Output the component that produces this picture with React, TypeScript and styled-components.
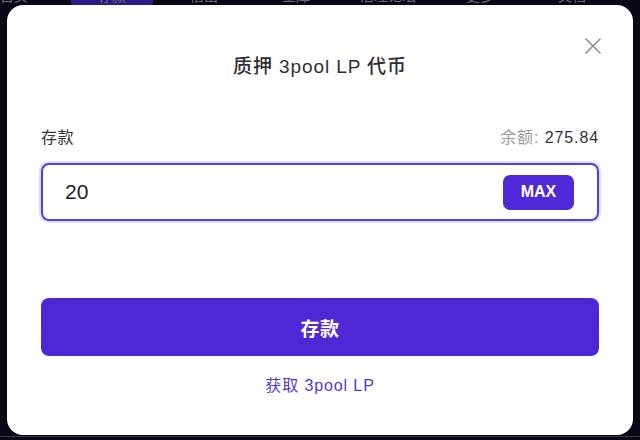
import styled, { createGlobalStyle } from "styled-components";

const GlobalStyle = createGlobalStyle`
  html, body {
    margin: 0;
    padding: 0;
    background: #0b0714;
    font-family: "Liberation Sans", "Noto Sans CJK SC", sans-serif;
  }
`;

const navItems = ["首页", "存款", "借出", "金库", "治理论坛", "更多", "文档"];

export default function App() {
  return (
    <>
      <GlobalStyle />
      <Page>
        {/* шапка, почти вся под диалогом */}
        <Nav>
          {navItems.map((item, i) => (
            <NavItem key={item} active={i === 1}>
              {item}
            </NavItem>
          ))}
        </Nav>

        <Overlay>
          <Dialog>
            <CloseButton aria-label="close">
              <svg width="18" height="18" viewBox="0 0 18 18">
                <path d="M2 2 L16 16 M16 2 L2 16" stroke="#939393" strokeWidth="1.7" strokeLinecap="round" />
              </svg>
            </CloseButton>

            <Title>质押 3pool LP 代币</Title>

            <LabelRow>
              <Label>存款</Label>
              <Balance>
                <Muted>余额: </Muted>275.84
              </Balance>
            </LabelRow>

            <InputBox>
              <Amount defaultValue="20" />
              <MaxButton>MAX</MaxButton>
            </InputBox>

            <SubmitButton>存款</SubmitButton>

            <GetLink href="#">获取 3pool LP</GetLink>
          </Dialog>
          <Divider />
        </Overlay>
      </Page>
    </>
  );
}

const Page = styled.div`
  position: relative;
  width: 640px;
  height: 440px;
  overflow: hidden;
  background: #0b0714;
`;

const Nav = styled.nav`
  display: flex;
  height: 6px;
  overflow: hidden;
`;

const NavItem = styled.div<{ active?: boolean }>`
  width: 82px;
  height: 20px;
  margin-top: -14px;
  margin-right: 10px;
  font-size: 14px;
  line-height: 20px;
  text-align: center;
  color: #6d6a74;
  background: ${(p) => (p.active ? "#2c1c86" : "transparent")};

  &:first-child {
    width: 40px;
    margin-left: -6px;
    margin-right: 37px;
  }
`;

const Overlay = styled.div`
  position: absolute;
  inset: 0;
  display: flex;
  flex-direction: column;
  padding: 5px 7px 0;
`;

const Dialog = styled.div`
  position: relative;
  box-sizing: border-box;
  width: 626px;
  height: 430px;
  background: #ffffff;
  border-radius: 16px;
  padding: 50px 34px 0;
  display: flex;
  flex-direction: column;
`;

const Divider = styled.div`
  height: 1px;
  margin: 1px -7px 0;
  background: #3b3843;
`;

const CloseButton = styled.button`
  position: absolute;
  top: 30px;
  right: 29px;
  width: 22px;
  height: 22px;
  padding: 2px;
  border: none;
  background: none;
  cursor: pointer;
`;

const Title = styled.h2`
  margin: 0;
  height: 24px;
  font-size: 19px;
  line-height: 24px;
  font-weight: 500;
  letter-spacing: 0.9px;
  text-align: center;
  color: #2f2f33;
`;

const LabelRow = styled.div`
  display: flex;
  justify-content: space-between;
  align-items: center;
  margin-top: 49px;
  height: 20px;
  font-size: 16px;
  line-height: 20px;
  letter-spacing: 0.4px;
`;

const Label = styled.span`
  color: #333338;
`;

const Balance = styled.span`
  color: #333338;
  letter-spacing: 0.9px;
`;

const Muted = styled.span`
  color: #9a9a9e;
`;

const InputBox = styled.div`
  box-sizing: border-box;
  display: flex;
  align-items: center;
  margin-top: 15px;
  height: 58px;
  padding: 0 23px 0 22px;
  border: 2px solid #5a3ce0;
  border-radius: 8px;
  box-shadow: 0 0 0 2px rgba(140, 170, 255, 0.35);
`;

const Amount = styled.input`
  flex: 1;
  min-width: 0;
  border: none;
  outline: none;
  padding: 0;
  font-family: inherit;
  font-size: 21px;
  color: #222226;
  background: transparent;
`;

const MaxButton = styled.button`
  width: 71px;
  height: 35px;
  border: none;
  border-radius: 7px;
  background: #4f28d8;
  color: #ffffff;
  font-family: inherit;
  font-size: 16px;
  font-weight: 700;
  cursor: pointer;
`;

const SubmitButton = styled.button`
  margin-top: 77px;
  height: 58px;
  border: none;
  border-radius: 8px;
  background: #4f28d6;
  color: #ffffff;
  font-family: inherit;
  font-size: 19px;
  font-weight: 700;
  letter-spacing: 0.5px;
  cursor: pointer;
`;

const GetLink = styled.a`
  align-self: center;
  margin-top: 20px;
  font-size: 16px;
  line-height: 20px;
  letter-spacing: 0.9px;
  color: #5636dc;
  text-decoration: none;
`;
